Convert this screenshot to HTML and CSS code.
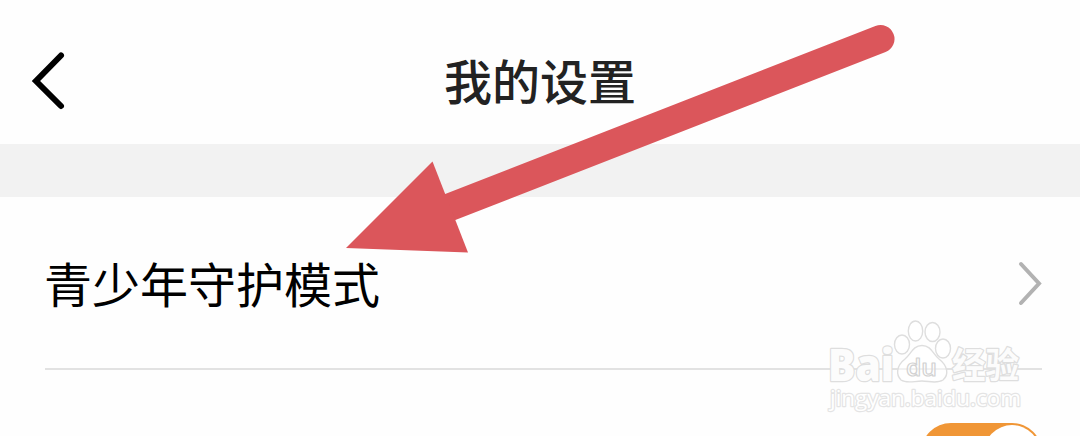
FILE: index.html
```
<!DOCTYPE html>
<html lang="zh-CN">
<head>
  <meta charset="UTF-8" />
  <meta name="viewport" content="width=device-width, initial-scale=1.0" />
  <title>我的设置</title>
  <link rel="stylesheet" href="styles.css">
</head>
<body>
  <header class="header">
    <svg class="back" width="40" height="64" viewBox="0 0 40 64">
      <path d="M33 7.5 L8 33 L33 58" />
    </svg>
    <h1>我的设置</h1>
  </header>

  <div class="gap"></div>

  <main class="settings">
    <div class="row">
      <span class="label">青少年守护模式</span>
      <svg class="chevron" width="30" height="50" viewBox="0 0 30 50">
        <path d="M9 6 L27 25.5 L9 45" />
      </svg>
    </div>
    <div class="row">
      <div class="toggle"><div class="knob"></div></div>
    </div>
  </main>

  <svg class="arrow" width="560" height="240" viewBox="340 20 560 240">
    <line x1="440" y1="211" x2="880.5" y2="39" />
    <polygon points="346,248 432.5,161.5 468,252.5" />
  </svg>

  <svg class="watermark" width="220" height="110" viewBox="815 310 220 110">
    <g class="logo">
      <text class="bai" x="828" y="381" textLength="66" lengthAdjust="spacingAndGlyphs">Bai</text>
      <ellipse cx="902" cy="344.5" rx="7.5" ry="9.5" />
      <ellipse cx="915.5" cy="331" rx="7.2" ry="10" />
      <ellipse cx="932.5" cy="332" rx="7.5" ry="9.5" />
      <ellipse cx="943" cy="348.5" rx="7.5" ry="9.5" />
      <path d="M922 345.5 C931 345.5 933 354 939 359 C948 366 949 375 943 380 C937 384 929 381 922 381 C914 381 907 384 901 380 C896 375 896 366 905 359 C911 354 913 345.5 922 345.5 Z" />
      <text class="du" x="906" y="376" textLength="31" lengthAdjust="spacingAndGlyphs">du</text>
      <text class="jingyan" x="952" y="378" textLength="67" lengthAdjust="spacingAndGlyphs">经验</text>
      <text class="url" x="830" y="406" textLength="191" lengthAdjust="spacingAndGlyphs">jingyan.baidu.com</text>
    </g>
  </svg>
</body>
</html>
```

FILE: styles.css
```
* {
  box-sizing: border-box;
}

body {
  position: relative;
  margin: 0;
  height: 436px;
  overflow: hidden;
  background: #fefefe;
  font-family: "Noto Sans CJK SC", sans-serif;
}

.header {
  display: grid;
  grid-template-columns: 40px 1fr 40px;
  align-items: center;
  height: 144px;
  padding: 16px 28px 0;
}

.header h1 {
  margin: 0;
  padding-bottom: 3px;
  text-align: center;
  font-size: 48px;
  font-weight: 500;
  line-height: 60px;
  color: #222;
}

.back path {
  fill: none;
  stroke: #000;
  stroke-width: 6;
  stroke-linecap: round;
}

.gap {
  height: 53px;
  background: #f2f2f2;
}

.settings {
  height: 239px;
  padding: 0 38px 0 45px;
  overflow: hidden;
}

.row {
  display: flex;
  align-items: center;
  justify-content: space-between;
  height: 173px;
  border-bottom: 2px solid #e2e2e2;
}

.row + .row {
  align-items: flex-start;
  justify-content: flex-end;
  padding-top: 53px;
}

.label {
  margin-left: -1px;
  padding-bottom: 2px;
  font-size: 48px;
  line-height: 70px;
  color: #000;
}

.chevron {
  margin-top: 1px;
}

.chevron path {
  fill: none;
  stroke: #b2b2b2;
  stroke-width: 4;
  stroke-linecap: round;
}

.toggle {
  display: flex;
  justify-content: flex-end;
  width: 121px;
  height: 60px;
  padding: 2px;
  border-radius: 30px;
  background: #f09636;
}

.knob {
  width: 56px;
  height: 56px;
  border-radius: 50%;
  background: #fff;
}

.arrow {
  position: absolute;
  left: 340px;
  top: 20px;
}

.arrow line {
  stroke: #db565b;
  stroke-width: 28;
  stroke-linecap: round;
}

.arrow polygon {
  fill: #db565b;
}

.watermark {
  position: absolute;
  left: 815px;
  top: 310px;
}

.logo {
  fill: rgba(255, 255, 255, 0.5);
  stroke: #dedede;
  stroke-width: 1.4;
  stroke-linejoin: round;
}

.bai,
.du {
  font-family: "Open Sans", sans-serif;
}

.bai {
  font-size: 45px;
  font-weight: 800;
  fill: #fcfcfc;
  stroke-width: 2.6;
  paint-order: stroke;
}

.du {
  font-size: 24px;
  font-weight: 600;
  stroke: #d2d2d2;
  stroke-width: 1.2;
}

.jingyan {
  font-size: 35px;
  font-weight: bold;
  fill: #fcfcfc;
  stroke-width: 2.6;
  paint-order: stroke;
}

.url {
  font-family: "Open Sans", sans-serif;
  font-size: 22px;
  fill: #fff;
  stroke: #e4e4e4;
  stroke-width: 2.4;
  paint-order: stroke;
}
```
